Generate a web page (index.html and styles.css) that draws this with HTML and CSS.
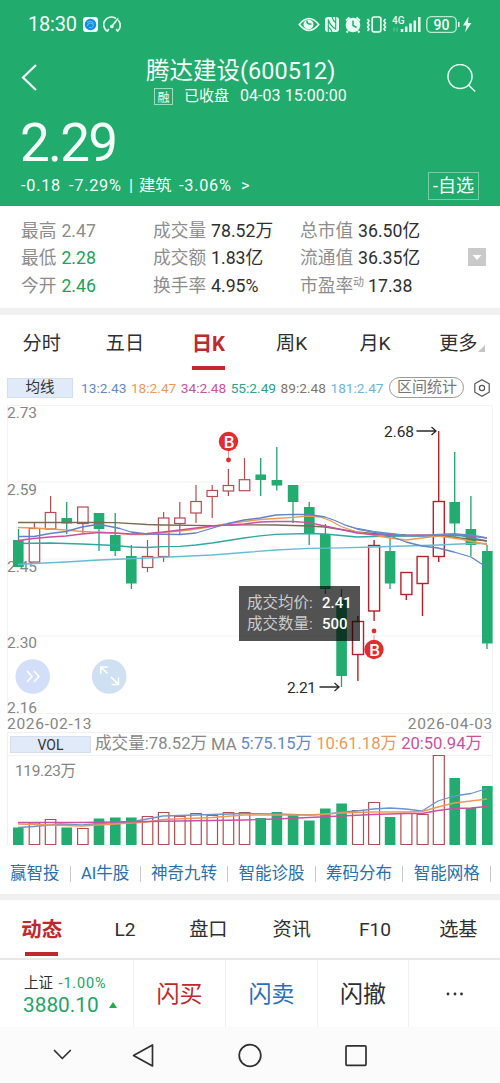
FILE: index.html
```html
<!DOCTYPE html>
<html lang="zh-CN">
<head>
<meta charset="utf-8">
<meta name="viewport" content="width=device-width, initial-scale=1">
<title>腾达建设(600512)</title>
<link rel="stylesheet" href="styles.css">
</head>
<body>
<header class="quote">
  <div class="status">
    <span class="clock">18:30</span>
    <svg class="app" width="15" height="15" viewBox="0 0 15 15"><rect width="15" height="15" rx="3" fill="#f2fbff"/><circle cx="7.5" cy="7.5" r="5.7" fill="#1689e6"/><path d="M4 5.5q4-3 7 1M4.5 9q0-3 3-3t3 3M6 10.5q3 1 4-1" fill="none" stroke="#5ed0f8"/></svg>
    <svg class="gauge" width="19" height="17" viewBox="0 0 19 17" fill="none" stroke="#e6fff2" stroke-width="1.7" stroke-linecap="round"><path d="M4.4 15.2A7.6 7.6 0 0 1 12.2 2.1M15.8 5A7.6 7.6 0 0 1 14.6 15.2M4.4 15.2l1-1.7M14.6 15.2l-1-1.7M8.8 10.5L14.6 3"/><circle cx="8.8" cy="10.5" r="1"/></svg>
    <svg class="sys" width="176" height="20" viewBox="298 13 176 20" fill="none" stroke="#e8fff3">
      <path d="M299.3 23.5Q309 11.5 318.7 23.5Q309 35.500 299.300 23.500Z" stroke-width="1.7"/><circle cx="308.500" cy="23.500" r="5" fill="#e8fff3" stroke="none"/><path d="M307 19.500q-.5 4 4.500 3.500" stroke="#21ab6d" stroke-width="1.500"/>
      <rect x="325" y="16" width="14" height="15" rx="3" fill="#e8fff3" stroke="none"/><path d="M328.300 31V18.500q1.500 6 7.400 9.500V16M332 16q1 3.500 3.500 5.500M332 31q-1-3-3.500-5" stroke="#21ab6d" stroke-width="1.100"/>
      <circle cx="353" cy="24" r="7.300" fill="#e8fff3" stroke="none"/><path d="M346 19.500l3.500-3M360 19.500l-3.500-3M348 30l-1.500 1.500M358 30l1.500 1.500" stroke-width="1.800"/><path d="M353 19.500v5l3.500 2" stroke="#21ab6d" stroke-width="1.500"/>
      <rect x="372.200" y="16" width="8.600" height="14.800" rx="1.800" stroke-width="1.700"/><path d="M367.500 18l1.500 2-1.500 2 1.500 2-1.500 2 1.500 2-1.500 2M385.500 18l-1.500 2 1.500 2-1.500 2 1.500 2-1.500 2 1.500 2" stroke-width="1.600"/>
      <text x="392" y="23" class="net">4G</text>
      <path d="M394 26.500v4M397 26.500v4" opacity=".4"/><path d="M402 28v3M406.200 25.500v5.500M410.500 22.500v8.500M414.800 19.500v11.500M419.300 16v15" stroke-width="2.500"/>
      <rect x="426.800" y="15.600" width="29.400" height="15.800" rx="4.500" stroke-width="1.400" stroke="#b9ebd0"/><text x="441.500" y="28.800" text-anchor="middle" class="level">90</text><path d="M458.800 21v5" stroke-width="1.500"/>
      <path d="M468.500 15.500l-5.500 9h3.500l-1.500 7 6.500-9.500h-3.500z" fill="#e8fff3" stroke="none"/>
    </svg>
  </div>
  <div class="title-row">
    <svg class="back" width="20" height="30" viewBox="0 0 20 30"><path d="M16 2L3 14.500L16 27" fill="none" stroke="#f4fff9" stroke-width="2.200"/></svg>
    <div class="title"><h1>腾达建设(600512)</h1><p><i>融</i><span>已收盘</span><time>04-03 15:00:00</time></p></div>
    <svg class="search" width="30" height="30" viewBox="0 0 30 30" fill="none" stroke="#eafff4" stroke-width="1.500"><circle cx="14" cy="12.500" r="12"/><path d="M22.500 21L29.200 27.500"/></svg>
  </div>
  <div class="price">2.29</div>
  <div class="change"><div class="deltas"><span class="num">-0.18</span><span class="num">-7.29%</span><span>|</span><span>建筑</span><span class="num">-3.06%</span><span>&gt;</span></div><button class="watch">-自选</button></div>
</header>

<section class="stats">
  <dl><div><dt>最高</dt><dd class="flat">2.47</dd></div><div><dt>最低</dt><dd class="down">2.28</dd></div><div><dt>今开</dt><dd class="down">2.46</dd></div></dl>
  <dl><div><dt>成交量</dt><dd>78.52万</dd></div><div><dt>成交额</dt><dd>1.83亿</dd></div><div><dt>换手率</dt><dd>4.95%</dd></div></dl>
  <dl><div><dt>总市值</dt><dd>36.50亿</dd></div><div><dt>流通值</dt><dd>36.35亿</dd></div><div><dt>市盈率<sup>动</sup></dt><dd>17.38</dd></div></dl>
  <svg class="expand" width="18" height="18" viewBox="0 0 18 18"><rect width="18" height="18" fill="#c9c9c9"/><path d="M4.500 7h9L9 12z" fill="#fff"/></svg>
</section>
<div class="band"></div>

<nav class="tabs period"><a>分时</a><a>五日</a><a class="on">日K</a><a>周K</a><a>月K</a><a>更多<svg class="corner" width="7" height="7" viewBox="0 0 7 7"><path d="M7 0v7H0z" fill="#c4c4c4"/></svg></a></nav>

<div class="averages">
  <span class="chip">均线</span>
  <div class="ma"><span class="c13">13:2.43</span><span class="c18">18:2.47</span><span class="c34">34:2.48</span><span class="c55">55:2.49</span><span class="c89">89:2.48</span><span class="c181">181:2.47</span></div>
  <span class="pill">区间统计</span>
  <svg class="hex" width="18" height="18" viewBox="0 0 18 18" fill="none" stroke="#555" stroke-width="1.200"><path d="M9 .8l7.200 4v8.400L9 17.200l-7.200-4V4.800z"/><circle cx="9" cy="9" r="2.600"/></svg>
</div>

<section class="chart">
  <svg width="500" height="314" viewBox="0 400 500 314">
    <path d="M7.500 405v308M492.500 405v308M7 405.500h486M7 482h486M7 559h486M7 636h486M7 713.500h486" stroke="#f3f3f3" fill="none"/>
    <g class="axis"><text x="7" y="417.500" textLength="30">2.73</text><text x="7" y="494.500" textLength="30">2.59</text><text x="7" y="571.500" textLength="30">2.45</text><text x="7" y="648" textLength="30">2.30</text><text x="7" y="712.500" textLength="30">2.16</text></g>
    <g class="falling">
      <path d="M18.500 529v38M66.700 502v32M99 513v38M115.200 513v43M131.400 545v44M260.700 458v38M276.800 447v43.500M293 485v38M309.200 502v43M325.400 524v70M341.500 589v98M390 537v52M454.700 452v87M470.900 496v60M487 545v104"/>
      <g><rect x="13" y="540" width="10.600" height="27"/><rect x="61.400" y="518" width="10.600" height="5.500"/><rect x="93.700" y="513" width="10.600" height="16"/><rect x="110" y="535" width="10.600" height="16"/><rect x="126" y="556" width="10.600" height="27.500"/><rect x="255.400" y="474.500" width="10.600" height="5.500"/><rect x="271.600" y="480" width="10.600" height="5.500"/><rect x="287.800" y="485" width="10.600" height="17"/><rect x="304" y="507" width="10.600" height="27"/><rect x="320" y="534" width="10.600" height="55"/><rect x="336.300" y="600" width="10.600" height="76"/><rect x="384.800" y="551" width="10.600" height="32.500"/><rect x="449.400" y="502" width="10.600" height="21.500"/><rect x="465.600" y="529" width="10.600" height="16"/><rect x="482" y="551" width="10.600" height="92.500"/></g>
    </g>
    <g class="rising early">
      <path d="M34.400 522v6M50.600 496v16M82.900 523.500V534M147.500 540v16.500M147.500 567.500v4.500M163.600 512v6M163.600 556.500v5.500M179.800 502v16M179.800 523.500V534M196 485v16.500M196 513v10M212.200 485v5.500M212.200 496.500V518M228.400 469v16M228.400 491v5M244.500 458v22"/>
      <g><rect x="29.200" y="528.500" width="10.500" height="33.500"/><rect x="45.300" y="512.500" width="10.500" height="16.500"/><rect x="77.600" y="507" width="10.500" height="16.500"/><rect x="142.300" y="556.500" width="10.500" height="11"/><rect x="158.400" y="518" width="10.500" height="38.500"/><rect x="174.600" y="518" width="10.500" height="5.500"/><rect x="190.800" y="501.500" width="10.500" height="11.500"/><rect x="207" y="490.500" width="10.500" height="6"/><rect x="223.200" y="485.500" width="10.500" height="5.500"/><rect x="239.300" y="479.700" width="10.500" height="11"/></g>
    </g>
    <g class="rising">
      <path d="M357.900 616v5.500M357.900 654.500V681M374.100 540v5.500M374.100 611v10M406.300 594.500v5.500M422.500 583.500V616M438.700 431v70.500M438.700 556.500v5.500"/>
      <g><rect x="352.500" y="621.500" width="11" height="33"/><rect x="368.600" y="545.500" width="11" height="65.500"/><rect x="400.900" y="572.500" width="11" height="22"/><rect x="417.100" y="556.500" width="11" height="27"/><rect x="433.300" y="501.500" width="11" height="55"/></g>
    </g>
    <g class="lines">
      <path stroke="#65bdd5" d="M18 564.500L34 563.500 66 562 99 560 147 558 180 556.500 212 555 244 552.500 276 550 309 548.300 341 547.800 373 547 406 546 438 545 471 543.500 487 543.500"/>
      <path stroke="#30a8a0" d="M18 543.500L50 543 82 544 115 545.500 131 547 147 547.500 163 546.700 180 546.300 196 545 212 543 228 540.500 244 538 260 535.800 276 534.300 309 533.500 325 534 341 535.500 357 537 373 536.500 406 536 438 536 460 535.500 487 541"/>
      <path stroke="#7a6c52" d="M18 522.500H99L115 522.700 147 524.500 163 525 212 525.700 244 524.800 276 525 309 526 325 527 341 529.500 357 532 373 533.500 406 535 438 535.300 460 538 487 541"/>
      <path stroke="#ed9a4d" d="M18 527.500L34 528 66 530 82 531.500 115 533 131 534.700 147 534.700 163 532.500 180 531 196 529 212 526.500 228 523.500 244 521.500 260 519.500 276 518.500 293 517.300 309 516 320 517 330 520.500 341 526.500 357 532 373 535 390 538 406 540 422 538 438 536 460 539 487 544.500"/>
      <path stroke="#cb50a5" d="M18 540.500L34 538.500 50 537 66 536 82 534 99 532.500 115 533 131 534 147 533.500 163 532 180 530 196 528 212 526 228 525 244 524 260 522 276 521.500 293 521.500 309 522.700 325 526 341 529.500 357 533 373 534.500 406 535.500 438 535 454 534 471 536 487 538"/>
      <path stroke="#6382ca" d="M18 536.500L34 536.500 50 533.500 66 531.500 82 527 94 525 105 525.500 120 528.500 131 532 147 534 180 534.500 196 533 206 530 228 523.500 244 520 260 518 276 515 293 514.300 309 514.500 325 517 335 520.500 345 525 357 529 373 532 390 536 406 542 422 546 438 548 454 552 471 557 487 567.500"/>
      <path stroke="#698bd0" d="M345 525L357 528.500 373 531.500 390 533.500 406 535.500 422 536 438 534.500 454 534 471 535 487 538"/>
    </g>
    <g class="marker"><path d="M228.500 450v8M374 635v8"/><circle cx="228.500" cy="460" r="2.400"/><circle cx="228.500" cy="441.500" r="9.700"/><circle cx="374" cy="631" r="2.400"/><circle cx="374" cy="649.500" r="9.700"/><text x="229" y="447.500">B</text><text x="374.500" y="655.500">B</text></g>
    <g class="extreme"><text x="384" y="437" textLength="30">2.68</text><path d="M416.500 431H436M431.500 427l4.500 4-4.500 4"/><text x="287" y="693" textLength="29">2.21</text><path d="M319.500 687H339M334.500 683l4.500 4-4.500 4"/></g>
    <g class="floating"><circle cx="32.700" cy="676.500" r="17.300" fill="#d3dff9"/><path d="M27 671l5 5.500-5 5.500M34 671l5 5.500-5 5.500"/><circle cx="109.200" cy="676.500" r="17.300" fill="#cfe0f2"/><path d="M100.800 674v-7h7M101 667l6.500 6.500M111 677l7 7M111.500 684.500h7v-7"/></g>
  </svg>
  <div class="tip"><p>成交均价: <b>2.41</b></p><p>成交数量: <b>500</b></p></div>
</section>
<div class="dates"><span>2026-02-13</span><span>2026-04-03</span></div>

<section class="volume">
  <div class="vol-head"><span class="chip">VOL</span><span class="total">成交量:78.52万</span><span>MA</span><span class="c13">5:75.15万</span><span class="c18">10:61.18万</span><span class="c34">20:50.94万</span></div>
  <svg width="500" height="101" viewBox="0 755 500 101">
    <path d="M7 755.500h486M7.500 755v90M492.500 755v90" stroke="#f1f1f1" fill="none"/>
    <g class="axis"><text x="15" y="776" textLength="61">119.23万</text></g>
    <g class="falling"><path class="bar" d="M13 845V827.500h10.600V845zM61.400 845V827.500H72V845zM93.700 845V818.500h10.600V845zM110 845V817.500h10.600V845zM126 845V817.500h10.600V845zM255.400 845V818H266v27zM271.600 845V812h10.600v33zM287.800 845V814h10.600v31zM304 845V820.500h10.600V845zM320 845V808.500h10.600V845zM336.300 845V803.500h10.600V845zM384.800 845V817h10.600v28zM449.400 845V778H460v67zM465.600 845V808h10.600v37zM482 845V786h10.600v59z"/></g>
    <g class="rising early"><path d="M29.200 844.500V823h10.500v21.500zM45.300 844.500V819.500h10.500v25zM77.600 844.500V828.500h10.500v16zM142.300 844.500V816.500h10.500v28zM158.400 844.500V812.500h10.500v32zM174.600 844.500V816.500h10.500v28zM190.800 844.500V813.500h10.500v31zM207 844.500V815.500h10.500v29zM223.200 844.500V812.500h10.500v32zM239.300 844.500V812.500h10.500v32zM352.500 844.500V810.500h11v34zM368.600 844.500V802.500h11v42zM400.900 844.500V813.500h11v31zM417.100 844.500V814.500h11v30zM433.300 844.500V755.500h11v89z"/></g>
    <g class="lines"><path stroke="#6b95ce" d="M18 827.500L34 826.500 60 824 82 825 99 823.500 131 822 147 819 163 816 196 815 244 813.500 276 814 309 815 325 814.700 341 812 357 811 373 809 390 808 406 809 422 811 438 801 454 796 471 793.500 487 788.500"/><path stroke="#ed9a58" d="M18 824L50 825 82 826 115 824 147 822 163 819.500 212 817.500 244 815 309 815 341 813 373 812 406 812 422 811.500 438 807 454 803 471 801 487 799"/><path stroke="#cb50a5" d="M18 822.500H82L147 821.500 212 820.500 244 820 276 819 309 817.500 341 816 373 814.500 406 813.500 422 813.500 438 810.500 454 808.500 471 808 487 806.500"/></g>
  </svg>
</section>

<div class="links"><a>赢智投</a><a>AI牛股</a><a>神奇九转</a><a>智能诊股</a><a>筹码分布</a><a>智能网格</a></div>
<div class="band thin"></div>
<nav class="tabs info"><a class="on">动态</a><a>L2</a><a>盘口</a><a>资讯</a><a>F10</a><a>选基</a></nav>
<footer class="trade"><div class="index"><p>上证 <span>-1.00%</span></p><strong>3880.10<svg width="8" height="6" viewBox="0 0 8 6"><path d="M4 0l4 6H0z" fill="#20aa48"/></svg></strong></div><a class="buy">闪买</a><a class="sell">闪卖</a><a>闪撤</a><a class="more"><svg width="18" height="4" viewBox="0 0 18 4" fill="#333"><circle cx="2" cy="2" r="1.400"/><circle cx="9" cy="2" r="1.400"/><circle cx="15.500" cy="2" r="1.400"/></svg></a></footer>
<div class="system-nav"><svg width="500" height="56" viewBox="0 1027 500 56" fill="none" stroke="#303030" stroke-width="1.700" stroke-linejoin="round" stroke-linecap="round"><path d="M54.500 1050.500l7.800 8 8-8M133.500 1055.500L152.500 1045v21z"/><circle cx="250" cy="1055.500" r="10.800"/><rect x="346" y="1045.800" width="20" height="19.500" rx="1"/></svg></div>
</body>
</html>
```

FILE: styles.css
```css
* { box-sizing: border-box; }
body { margin: 0; width: 500px; background: #fff; color: #2f2f2f; font-family: Roboto, "Noto Sans CJK SC", sans-serif; }
h1, p, dl, dd { margin: 0; font-weight: 400; }
svg { display: block; flex: none; }

.quote { height: 206px; background: #21ab6d; color: #f4fff9; overflow: hidden; }
.status { display: flex; align-items: center; height: 46px; padding: 2px 0 0 28px; }
.clock { width: 55px; font-size: 20px; line-height: 24px; letter-spacing: -.2px; }
.gauge { margin-left: 5px; }
.sys { margin-left: 176px; }
.sys text { fill: #f4fff9; stroke: none; }
.net { font-size: 10px; font-weight: 500; }
.level { font-size: 14px; font-weight: 500; }
.title-row { display: flex; height: 64px; padding: 8px 24px 0 20px; }
.back { margin-top: 9px; }
.title { flex: 1; padding-left: 106px; }
.title h1 { padding-top: 1px; font-size: 23.5px; line-height: 32px; white-space: nowrap; }
.title p { display: flex; align-items: center; height: 18px; margin-left: 8px; }
.title i { width: 19px; height: 17px; border: 1px solid #9ddcbe; font: 12px/15px "Noto Sans CJK SC", sans-serif; text-align: center; }
.title span { margin-left: 11px; font-size: 15px; line-height: 18px; }
.title time { margin-left: 11px; font-size: 16px; line-height: 18px; letter-spacing: .05px; }
.search { margin: 10px 0 0; }
.price { height: 61px; padding: 2px 0 0 20px; font-size: 53px; line-height: 62px; letter-spacing: -1.8px; }
.change { display: flex; justify-content: space-between; align-items: center; height: 30px; padding: 0 21px; }
.deltas { display: grid; grid-template-columns: 48px 60px 10px 40px 62px 12px; font-size: 16.300px; line-height: 22px; white-space: nowrap; }
.num { letter-spacing: .75px; }
.watch { width: 51px; height: 28px; padding: 0; border: 1px solid #79cda5; background: none; color: inherit; font: 18px/24px Roboto, "Noto Sans CJK SC", sans-serif; }

.stats { display: grid; grid-template-columns: 132px 147px 168px 18px; height: 102px; padding: 10px 14px 0 21px; }
.stats dl { padding-top: .6px; }
.stats dl > div { display: flex; gap: 5px; height: 27.500px; font-size: 17.700px; line-height: 28px; white-space: nowrap; }
.stats dt { color: #8d8d8d; }
.stats .flat { color: #8d8d8d; }
.stats .down { color: #1ca160; }
.stats sup { font-size: 11px; line-height: 0; vertical-align: 6px; }
.stats dl:nth-child(3) > div:nth-child(3) { gap: 4px; }
.expand { margin-top: 32px; }
.band { height: 7px; background: #f0f0f0; }

.tabs { display: grid; grid-template-columns: repeat(6, 1fr); font-size: 19.200px; text-align: center; }
.tabs a { display: flex; flex-direction: column; align-items: center; position: relative; }
.tabs .on { color: #c2272d; font-size: 20.400px; font-weight: 700; }
.tabs .on::after { content: ""; width: 33px; height: 4px; background: #c2272d; }
.period { height: 58px; padding-top: 9px; line-height: 40px; }
.period .on::after { margin-top: 2px; }
.corner { position: absolute; right: 15px; top: 21px; }

.averages { display: flex; align-items: center; height: 27px; padding: 2px 9px 0 7px; }
.chip { display: flex; align-items: center; justify-content: center; width: 66px; height: 20px; border: 1px solid #d5e0ec; background: #e0eaf8; color: #333; font-size: 14.500px; line-height: 18px; }
.ma { display: grid; grid-template-columns: repeat(5, 49.900px) 59px; padding-left: 8px; font-size: 13.700px; }
.c13 { color: #6688c4; }
.c18 { color: #e99a5a; }
.c34 { color: #c8529f; }
.c55 { color: #2aa28d; }
.c89 { color: #81766b; }
.c181 { color: #6bb5db; }
.pill { width: 75px; height: 21px; border: 1px solid #999; border-radius: 11px; color: #777; font-size: 15px; line-height: 19px; text-align: center; }
.hex { margin-left: auto; }

.chart { position: relative; height: 314px; }
.chart > svg { overflow: visible; }
.axis { fill: #858585; font-size: 15.500px; }
.falling { stroke: #22a36b; stroke-width: 1.300; }
.falling rect, .bar { fill: #22ac70; stroke: none; }
.rising { fill: none; stroke: #b8202a; stroke-width: 1.400; }
.rising rect { fill: #fff; }
.early { stroke: #b44c50; stroke-width: 1.200; }
.lines { fill: none; stroke-width: 1.300; stroke-linejoin: round; }
.marker { fill: #df2d30; stroke: #ef9a95; }
.marker circle { stroke: none; }
.marker text { fill: #fff; stroke: none; font-size: 17px; font-weight: 500; text-anchor: middle; }
.extreme { fill: #2b2b2b; font-size: 15.500px; }
.extreme path { fill: none; stroke: #2b2b2b; stroke-width: 1.300; }
.floating path { fill: none; stroke: #fff; stroke-width: 1.500; }
.tip { position: absolute; left: 239px; top: 186px; width: 121px; height: 55px; padding: 7px 0 0 8px; background: rgba(0, 0, 0, .68); color: #ccc; font-size: 15.500px; white-space: nowrap; }
.tip p { display: flex; justify-content: space-between; width: 104px; line-height: 20.500px; }
.tip b { width: 29px; color: #fff; font-weight: 500; font-size: 15px; }
.dates { display: flex; justify-content: space-between; height: 18px; padding: 1px 7px 0; color: #858585; font-size: 15.500px; line-height: 19px; letter-spacing: .7px; }
.vol-head { display: flex; align-items: center; height: 23px; margin: 0 7px; padding: 1px 0 0 2px; border: 1px solid #f1f1f1; border-bottom: 0; color: #888; font-size: 16.600px; line-height: 20px; white-space: nowrap; }
.vol-head span + span + span { margin-left: 4px; }
.vol-head > span:not(.chip) { height: 22px; font-family: Roboto, "Noto Sans CJK SC", sans-serif; }
.vol-head .chip { width: 81px; height: 17px; margin-right: 4px; font-size: 14px; }
.vol-head > span:nth-child(3) { padding-top: 1px; }

.links { display: flex; height: 38px; padding-left: 10px; color: #2a6fae; font-size: 16.500px; line-height: 33px; white-space: nowrap; }
.links a { display: flex; align-items: center; height: 35px; }
.links a::after { content: ""; width: 1px; height: 16px; margin: 0 10.400px 0 10.200px; background: #c8c8c8; }
.thin { height: 6px; }
.info { height: 60px; padding-top: 9px; border-bottom: 2px solid #e7e7e7; line-height: 42px; }
.info .on::after { margin-top: 1px; }
.trade { display: grid; grid-template-columns: 133px 92px 92px 91px 92px; height: 67px; }
.trade > a { display: grid; place-items: center; padding-bottom: 3px; border-left: 1px solid #f0f0f0; font-size: 23px; }
.trade .more { padding-bottom: 0; }
.trade .buy { color: #c2272d; }
.trade .sell { color: #2870b9; }
.index { padding: 14px 0 0 23px; font-size: 14.500px; line-height: 20px; white-space: nowrap; }
.index p { padding-left: 1px; }
.index span { margin-left: 2px; color: #25a368; letter-spacing: .8px; }
.index strong { display: flex; align-items: center; gap: 10px; color: #25a368; font-size: 20.800px; line-height: 22px; font-weight: 400; }
.system-nav { height: 56px; background: #fbfbfb; }
```
